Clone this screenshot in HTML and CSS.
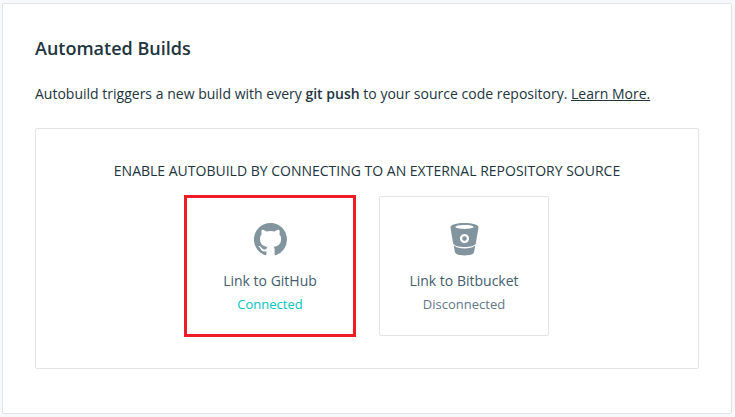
FILE: index.html
```html
<!DOCTYPE html>
<html lang="en">
<head>
<meta charset="utf-8">
<title>Automated Builds</title>
<link rel="stylesheet" href="styles.css">
</head>
<body>
<main class="card">
  <h1 class="title">Automated Builds</h1>
  <p class="intro">Autobuild triggers a new build with every <strong>git push</strong> to your source code repository. <a class="more" href="#">Learn More.</a></p>
  <section class="panel">
    <h2 class="caption">ENABLE AUTOBUILD BY CONNECTING TO AN EXTERNAL REPOSITORY SOURCE</h2>
    <div class="sources">
      <div class="source selected">
        <svg class="icon" viewBox="0 0 16 16" aria-hidden="true"><path d="M8 0C3.58 0 0 3.58 0 8c0 3.54 2.29 6.53 5.47 7.59.4.07.55-.17.55-.38 0-.19-.01-.82-.01-1.49-2.01.37-2.53-.49-2.69-.94-.09-.23-.48-.94-.82-1.13-.28-.15-.68-.52-.01-.53.63-.01 1.08.58 1.23.82.72 1.21 1.87.87 2.33.66.07-.52.28-.87.51-1.07-1.78-.2-3.64-.89-3.64-3.95 0-.87.31-1.59.82-2.15-.08-.2-.36-1.02.08-2.12 0 0 .67-.21 2.2.82.64-.18 1.32-.27 2-.27s1.36.09 2 .27c1.53-1.04 2.2-.82 2.2-.82.44 1.1.16 1.92.08 2.12.51.56.82 1.27.82 2.15 0 3.07-1.87 3.75-3.65 3.95.29.25.54.73.54 1.48 0 1.07-.01 1.93-.01 2.2 0 .21.15.46.55.38A8.01 8.01 0 0 0 16 8c0-4.42-3.58-8-8-8z"/></svg>
        <span class="name">Link to GitHub</span>
        <span class="status connected">Connected</span>
      </div>
      <div class="source">
        <svg class="icon" viewBox="0 0 33 33" aria-hidden="true"><path fill-rule="evenodd" d="M16.500 0C8.500 0 2.500 1.700 2.500 4.200c0 .9 2.200 13.500 2.700 16.200.4 1.900 5.200 3.600 11.300 3.600s10.900-1.700 11.300-3.600c.5-2.700 2.700-15.300 2.700-16.200C30.500 1.700 24.500 0 16.500 0zm0 2.100c5.100 0 9 .8 9 1.900s-3.900 1.900-9 1.900-9-.8-9-1.900 3.900-1.900 9-1.900zm0 8.900a4.600 4.600 0 1 1 0 9.200 4.600 4.600 0 0 1 0-9.200zM6.400 22.700c-.4 0-.6.3-.5.7.5 2.500.8 4.500 1.200 6 .5 1.700 4.500 3 9.400 3s8.900-1.300 9.400-3c.4-1.500.7-3.500 1.200-6 .1-.4-.1-.7-.5-.7-2 1.700-5.500 2.700-10.100 2.700s-8.100-1-10.100-2.700z"/><circle cx="16.500" cy="15.600" r="2.300"/></svg>
        <span class="name">Link to Bitbucket</span>
        <span class="status">Disconnected</span>
      </div>
    </div>
  </section>
</main>
</body>
</html>
```
FILE: styles.css
```css
* {
  box-sizing: border-box;
}

body {
  margin: 0;
  padding: 3px 3px 3px 2px;
  background: #f7f8f9;
  color: #254356;
  font: 14px/20px "Open Sans", sans-serif;
}

.card {
  height: 411px;
  padding: 32px;
  background: #fff;
  border: 1px solid #e0e4e7;
  border-radius: 2px;
}

.title {
  margin: 0 0 23px;
  color: #22343e;
  font-size: 18px;
  font-weight: 600;
  line-height: 25px;
}

.intro {
  margin: 0 0 24px;
  color: #22343e;
  white-space: nowrap;
  word-spacing: 0.05px;
}

.intro strong {
  font-weight: 600;
}

.more {
  color: inherit;
}

.panel {
  height: 241px;
  padding-top: 32px;
  border: 1px solid #e0e4e7;
  border-radius: 2px;
}

.caption {
  margin: 0 0 14px;
  color: #22343e;
  font-size: 14px;
  font-weight: 400;
  line-height: 20px;
  text-align: center;
}

.sources {
  display: flex;
  justify-content: center;
  align-items: center;
  gap: 23px;
  padding-right: 2px;
}

.source {
  display: flex;
  flex-direction: column;
  align-items: center;
  width: 170px;
  height: 140px;
  padding: 26px 0 0 1px;
  border: 1px solid #e0e4e7;
  border-radius: 2px;
}

.selected {
  width: 172px;
  height: 142px;
  padding-top: 25px;
  border: 3px solid #ee1c25;
  border-radius: 0;
}

.icon {
  width: 33px;
  height: 33px;
  margin-bottom: 15px;
  fill: #82949e;
}

.name {
  color: #445d6e;
}

.status {
  margin-top: 3px;
  color: #627986;
  font-size: 13px;
}

.connected {
  color: #00c4bd;
}
```
